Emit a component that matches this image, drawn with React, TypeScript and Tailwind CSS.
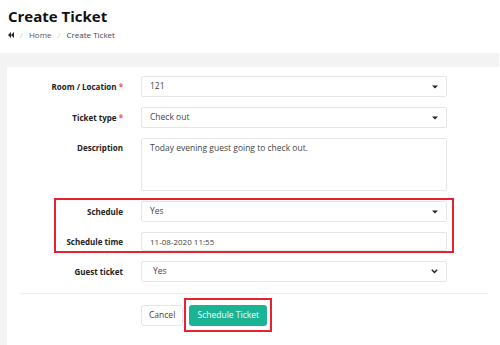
import React from 'react';

function Caret() {
  return (
    <svg width="6" height="4" viewBox="0 0 6 4" className="shrink-0">
      <path d="M0 0.5 H6 L3 3.5 Z" fill="#222" />
    </svg>
  );
}

function Chevron() {
  return (
    <svg width="7" height="5" viewBox="0 0 7 5" className="shrink-0">
      <path d="M0.8 0.8 L3.5 3.5 L6.2 0.8" fill="none" stroke="#222" strokeWidth="1.5" />
    </svg>
  );
}

function Row({ label, required, children, top }: { label: string; required?: boolean; children: React.ReactNode; top?: boolean }) {
  return (
    <div className={top ? 'flex items-start' : 'flex items-center'}>
      <div className={'w-[116px] text-right text-[8px] font-bold text-[#222] ' + (top ? 'pt-[4px]' : '')}>
        {label}
        {required && <span className="text-[#ed5565]"> *</span>}
      </div>
      <div className="ml-[18px] w-[306px]">{children}</div>
    </div>
  );
}

function SelectBox({ value, chevron }: { value: string; chevron?: boolean }) {
  return (
    <div className="h-[21px] border border-[#e5e6e7] rounded-[2px] flex items-center justify-between pl-[8px] pr-[8px] text-[8.5px] text-[#444]">
      <span className={chevron ? 'pl-[3px]' : ''}>{value}</span>
      {chevron ? <Chevron /> : <Caret />}
    </div>
  );
}

export default function App() {
  return (
    <div className="w-[500px] h-[345px] bg-white font-['Open_Sans',sans-serif] overflow-hidden">
      <div className="h-[53px] pl-[8px] pt-[5px]">
        <h1 className="text-[15px] font-bold leading-[22px] text-[#111]">Create Ticket</h1>
        <nav className="mt-[2px] flex items-center text-[8px] text-[#555]">
          <svg width="6" height="6" viewBox="0 0 6 6">
            <path d="M3 0 L0 3 L3 6 Z M6 0 L3 3 L6 6 Z" fill="#222" />
          </svg>
          <span className="mx-[6px] text-[#ccc]">/</span>
          <span>Home</span>
          <span className="mx-[6px] text-[#ccc]">/</span>
          <span className="text-[#444]">Create Ticket</span>
        </nav>
      </div>
      <div className="w-[499px] h-[292px] bg-[#f3f3f4] pl-[7px] pt-[14px]">
        <div className="h-full bg-white pt-[9px]">
          <div className="flex flex-col gap-[10px]">
            <Row label="Room / Location" required>
              <SelectBox value="121" />
            </Row>
            <Row label="Ticket type" required>
              <SelectBox value="Check out" />
            </Row>
            <Row label="Description" top>
              <div className="h-[53px] border border-[#e5e6e7] rounded-[2px] pl-[8px] pt-[3px] text-[8.5px] text-[#444]">
                Today evening guest going to check out.
              </div>
            </Row>
            <div className="relative flex flex-col gap-[10px]">
              <div className="absolute left-[47px] top-[-3px] w-[400px] h-[55px] border-2 border-[#e8212e] pointer-events-none" />
              <Row label="Schedule">
                <SelectBox value="Yes" />
              </Row>
              <Row label="Schedule time">
                <div className="h-[19px] border border-[#e5e6e7] rounded-[2px] flex items-center pl-[8px] text-[8px] text-[#444]">
                  11-08-2020 11:55
                </div>
              </Row>
            </div>
            <Row label="Guest ticket">
              <SelectBox value="Yes" chevron />
            </Row>
          </div>
          <div className="ml-[13px] mt-[11px] w-[468px] border-t border-[#eeeeee]" />
          <div className="ml-[134px] mt-[11px] flex items-center gap-[6px]">
            <button className="h-[21px] px-[7px] border border-[#e5e6e7] rounded-[3px] bg-white text-[8.5px] text-[#444]">
              Cancel
            </button>
            <span className="relative flex">
              <span className="absolute left-[-5px] top-[-7px] w-[88px] h-[34px] border-2 border-[#e8212e] pointer-events-none" />
              <button className="h-[21px] w-[78px] rounded-[3px] bg-[#1ab394] text-[8.5px] text-white">
                Schedule Ticket
              </button>
            </span>
          </div>
        </div>
      </div>
    </div>
  );
}
